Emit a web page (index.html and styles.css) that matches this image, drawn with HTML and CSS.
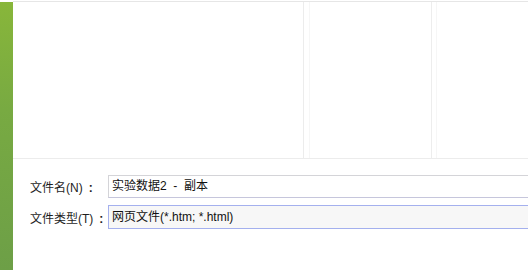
FILE: index.html
```html
<!DOCTYPE html>
<html lang="zh-CN">
<head>
<meta charset="utf-8">
<title>保存网页</title>
<link rel="stylesheet" href="styles.css">
</head>
<body>
<div class="window">
  <div class="sidebar"></div>
  <div class="main">
    <div class="list">
      <div class="col col-name"></div>
      <div class="col col-date"></div>
      <div class="col col-type"></div>
    </div>
    <div class="form">
      <div class="row">
        <label class="label">文件名(N)<span class="colon">:</span></label>
        <div class="field">实验数据2&nbsp; -&nbsp; 副本</div>
      </div>
      <div class="row">
        <label class="label">文件类型(T)<span class="colon">:</span></label>
        <div class="field field-active">网页文件(*.htm; *.html)</div>
      </div>
    </div>
  </div>
</div>
</body>
</html>
```

FILE: styles.css
```css
html, body {
  margin: 0;
  padding: 0;
  background: #ffffff;
}
body {
  width: 528px;
  height: 270px;
  overflow: hidden;
  font-family: "Liberation Sans", "Noto Sans CJK SC", sans-serif;
  font-size: 12px;
  color: #1a1a1a;
}
.window {
  display: flex;
  height: 270px;
  border-top: 1px solid #ffffff;
  box-sizing: border-box;
}
.sidebar {
  width: 13px;
  margin-top: 1px;
  background: linear-gradient(180deg, #88b63a 0%, #78aa42 40%, #6d9f47 100%);
  flex: none;
}
.main {
  flex: 1;
  display: flex;
  flex-direction: column;
}
.list {
  height: 156px;
  border-top: 1px solid #e6e6e6;
  border-bottom: 1px solid #ececec;
  display: flex;
  box-sizing: content-box;
}
.col {
  height: 100%;
  box-sizing: border-box;
}
.col-name {
  width: 291px;
  border-right: 1px solid #ececec;
}
.col-date {
  margin-left: 5px;
  width: 123px;
  border-left: 1px solid #f6f6f6;
  border-right: 1px solid #ededed;
}
.col-type {
  margin-left: 4px;
  flex: 1;
  border-left: 1px solid #f6f6f6;
}
.form {
  padding: 16px 0 0 17px;
  display: flex;
  flex-direction: column;
  gap: 7px;
}
.row {
  display: flex;
  align-items: center;
}
.label {
  width: 78px;
  flex: none;
  color: #1e1e1e;
}
.colon {
  margin-left: 6px;
  font-weight: bold;
}
.field {
  flex: 1;
  height: 23px;
  line-height: 21px;
  padding-left: 3px;
  box-sizing: border-box;
  border: 1px solid #d4d4d8;
  border-right: none;
  border-bottom-color: #c6c6dc;
  background: #ffffff;
  white-space: nowrap;
  color: #111111;
}
.field-active {
  height: 24px;
  line-height: 22px;
  border-color: #a4b0ee;
  background: #f7f7f7;
}
```
